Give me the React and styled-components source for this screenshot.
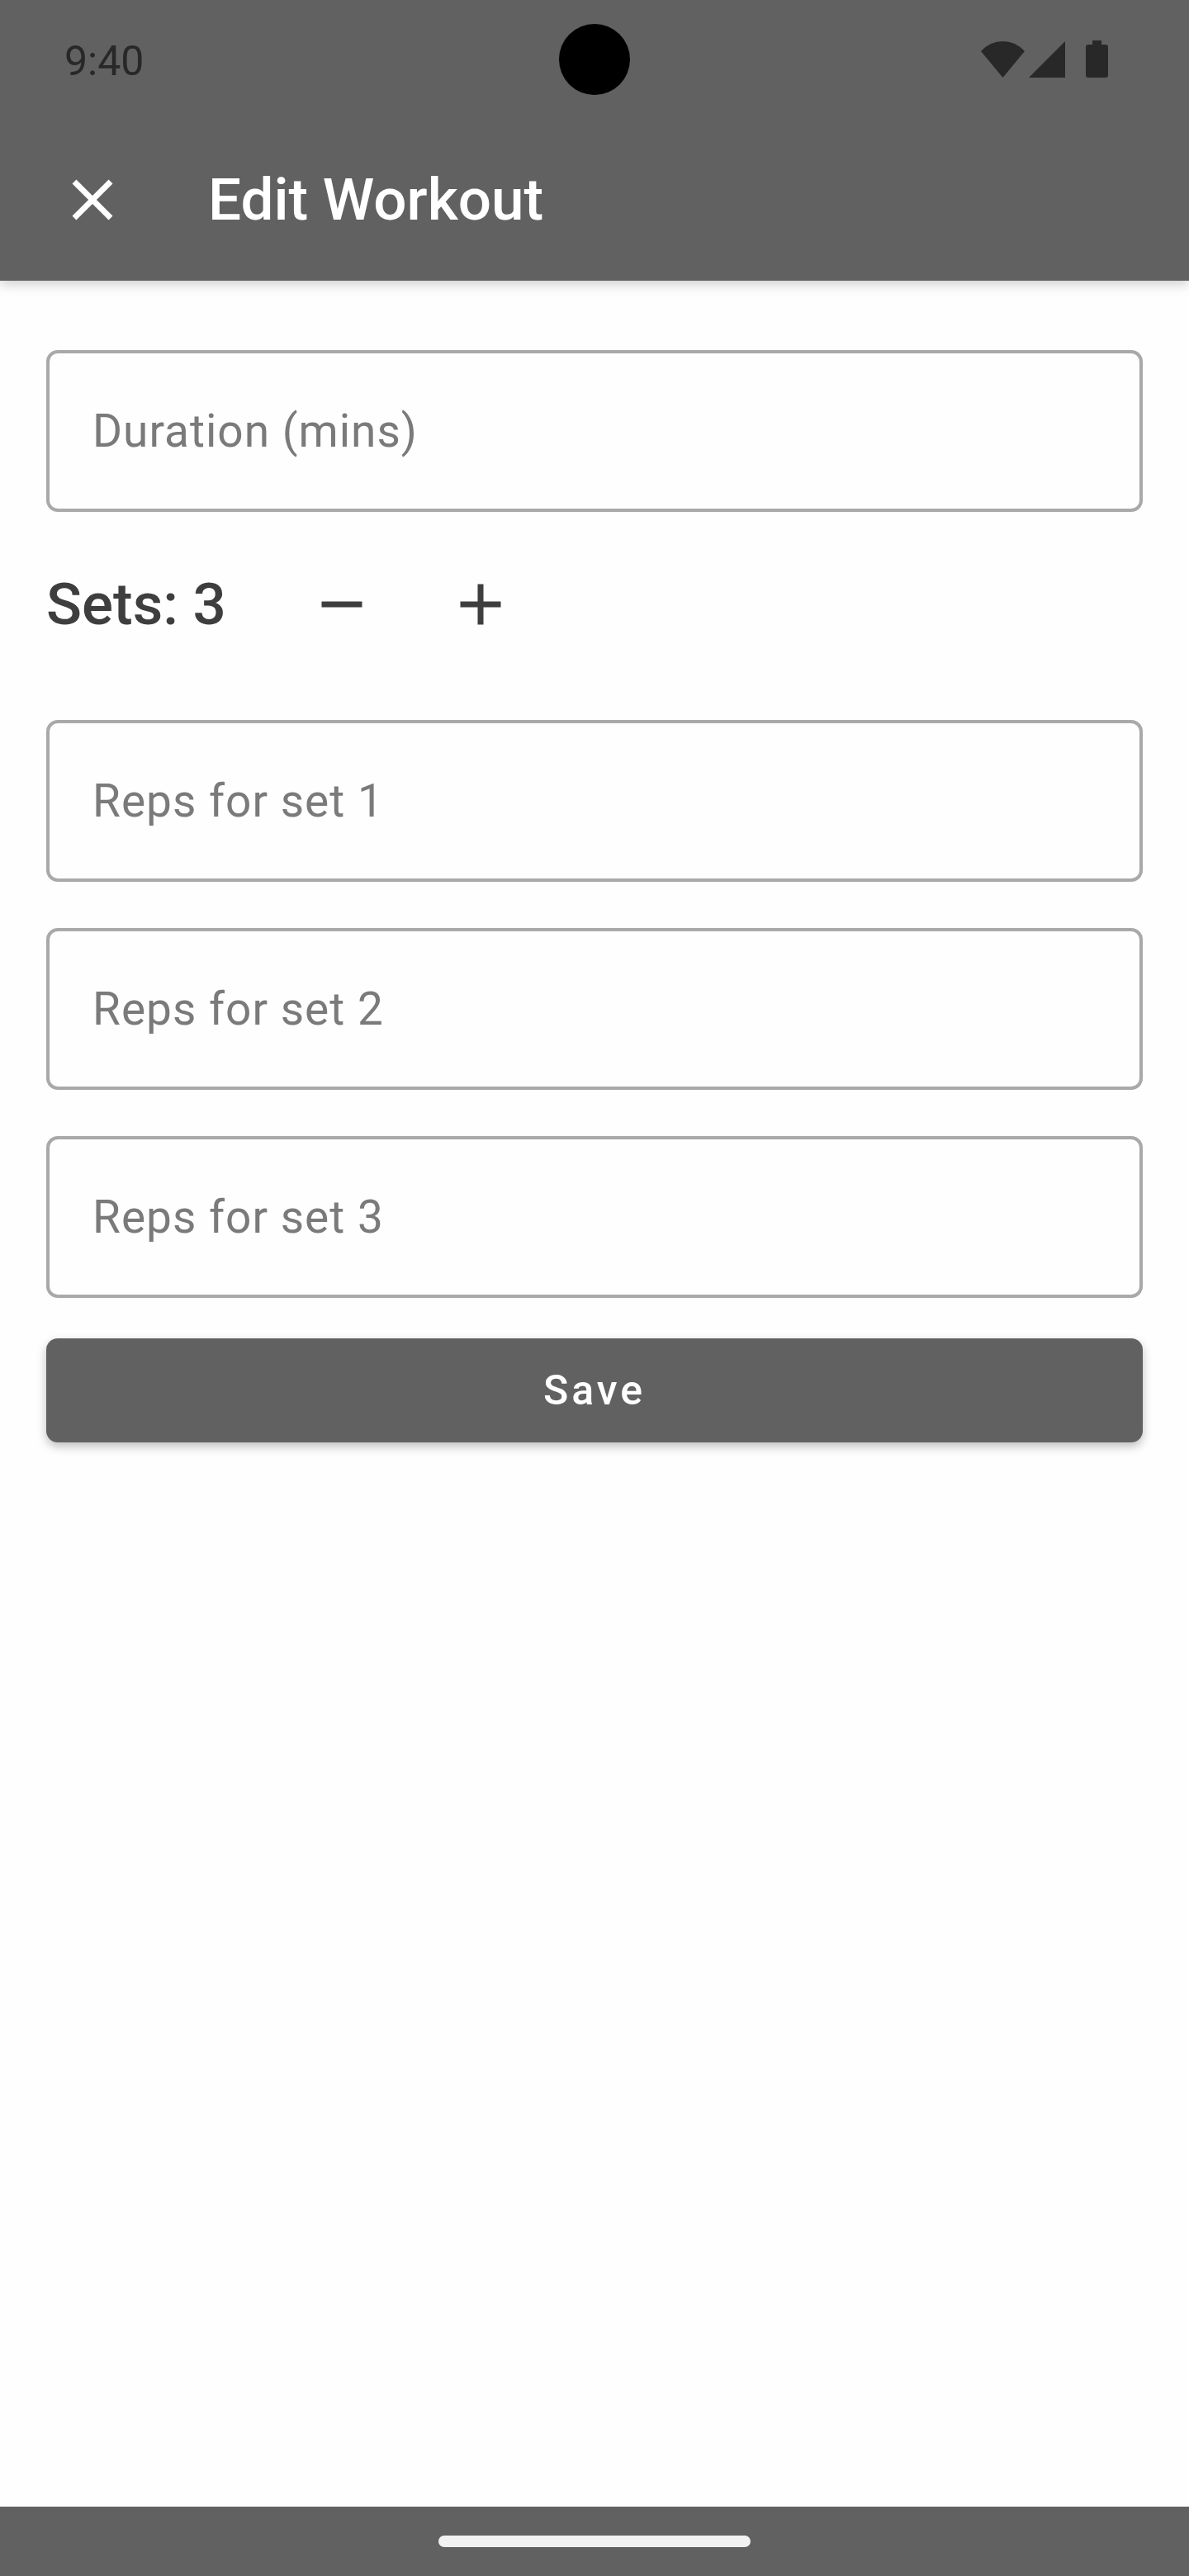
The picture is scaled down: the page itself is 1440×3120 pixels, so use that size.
import React, { useState } from "react";
import styled, { createGlobalStyle } from "styled-components";

const GlobalStyle = createGlobalStyle`
  *, *::before, *::after { box-sizing: border-box; }
  body {
    margin: 0;
    background: #fefefe;
    font-family: Roboto, "Liberation Sans", sans-serif;
  }
`;

const Screen = styled.div`
  display: flex;
  flex-direction: column;
  min-height: 100vh;
`;

const Header = styled.header`
  background: #616161;
  box-shadow: 0 4px 14px rgba(0, 0, 0, 0.2);
`;

const StatusBar = styled.div`
  display: grid;
  grid-template-columns: 1fr auto 1fr;
  align-items: center;
  height: 144px;
  color: #282828;
`;

const Clock = styled.time`
  padding: 4px 0 0 78px;
  font-size: 50px;
  line-height: 60px;
`;

const Camera = styled.span`
  width: 86px;
  height: 86px;
  border-radius: 50%;
  background: #000;
`;

const StatusIcons = styled.svg`
  justify-self: end;
  display: block;
  margin-right: 98px;
  fill: currentColor;
`;

const Toolbar = styled.div`
  display: flex;
  align-items: center;
  gap: 84px;
  height: 196px;
  padding: 0 56px;
`;

const IconButton = styled.button`
  display: flex;
  align-items: center;
  justify-content: center;
  width: ${(p) => p.$size}px;
  height: ${(p) => p.$size}px;
  padding: 0;
  border: 0;
  background: none;
  color: inherit;
  cursor: pointer;
`;

const CloseButton = styled(IconButton)`
  color: #fff;
`;

const Icon = styled.svg`
  width: 84px;
  height: 84px;
  fill: currentColor;
`;

const Title = styled.h1`
  margin: 0;
  color: #fff;
  font-size: 71px;
  font-weight: 500;
  line-height: 84px;
`;

const Form = styled.form`
  flex: 1;
  display: flex;
  flex-direction: column;
  padding: 84px 56px;
`;

const Field = styled.input`
  width: 100%;
  height: 196px;
  padding: 0 52px;
  border: 4px solid #a9a9a9;
  border-radius: 14px;
  background: transparent;
  color: #3e3e3e;
  font: 400 55px / 66px Roboto, "Liberation Sans", sans-serif;
  letter-spacing: 1px;

  &::placeholder {
    color: #7a7a7a;
    opacity: 1;
  }
`;

const SetsRow = styled.div`
  display: flex;
  align-items: center;
  margin: 28px 0 56px;
  color: #3e3e3e;
`;

const SetsCount = styled.output`
  margin-right: 56px;
  font-size: 71px;
  font-weight: 500;
  line-height: 84px;
`;

const RepsList = styled.div`
  display: flex;
  flex-direction: column;
  gap: 56px;
`;

const SaveButton = styled.button`
  height: 126px;
  margin-top: 49px;
  border: 0;
  border-radius: 14px;
  background: #616161;
  box-shadow: 0 5px 12px rgba(0, 0, 0, 0.25);
  color: #fff;
  font: 500 50px / 60px Roboto, "Liberation Sans", sans-serif;
  letter-spacing: 4px;
  cursor: pointer;
`;

const NavBar = styled.footer`
  display: flex;
  align-items: center;
  justify-content: center;
  height: 84px;
  background: #616161;
`;

const HomeHandle = styled.span`
  width: 378px;
  height: 14px;
  border-radius: 7px;
  background: #f2f2f2;
`;

function Glyph({ d }) {
  return (
    <Icon viewBox="0 0 24 24" aria-hidden="true">
      <path d={d} />
    </Icon>
  );
}

const CLOSE =
  "M19 6.41 17.59 5 12 10.59 6.41 5 5 6.41 10.59 12 5 17.59 6.41 19 12 13.41 17.59 19 19 17.59 13.41 12z";
const MINUS = "M19 13H5v-2h14v2z";
const PLUS = "M19 13h-6v6h-2v-6H5v-2h6V5h2v6h6v2z";

export default function App() {
  const [sets, setSets] = useState(3);

  return (
    <Screen>
      <GlobalStyle />
      <Header>
        <StatusBar>
          <Clock>9:40</Clock>
          <Camera />
          <StatusIcons width="154" height="46" viewBox="0 0 154 46" aria-hidden="true">
            <path d="M0 13Q11 1 26.500 1T53 13L26.500 45z" />
            <path d="M102 1V45H58z" />
            <path d="M135 0h11v5h5q3 0 3 3v34q0 3-3 3h-21q-3 0-3-3V8q0-3 3-3h5z" />
          </StatusIcons>
        </StatusBar>
        <Toolbar>
          <CloseButton type="button" aria-label="Close" $size={112}>
            <Glyph d={CLOSE} />
          </CloseButton>
          <Title>Edit Workout</Title>
        </Toolbar>
      </Header>
      <Form onSubmit={(e) => e.preventDefault()}>
        <Field type="text" inputMode="numeric" placeholder="Duration (mins)" aria-label="Duration (mins)" />
        <SetsRow>
          <SetsCount>Sets: {sets}</SetsCount>
          <IconButton
            type="button"
            aria-label="Remove set"
            $size={168}
            onClick={() => setSets((n) => Math.max(1, n - 1))}
          >
            <Glyph d={MINUS} />
          </IconButton>
          <IconButton type="button" aria-label="Add set" $size={168} onClick={() => setSets((n) => n + 1)}>
            <Glyph d={PLUS} />
          </IconButton>
        </SetsRow>
        <RepsList>
          {Array.from({ length: sets }, (_, i) => (
            <Field
              key={i}
              type="text"
              inputMode="numeric"
              placeholder={`Reps for set ${i + 1}`}
              aria-label={`Reps for set ${i + 1}`}
            />
          ))}
        </RepsList>
        <SaveButton type="submit">Save</SaveButton>
      </Form>
      <NavBar>
        <HomeHandle />
      </NavBar>
    </Screen>
  );
}
